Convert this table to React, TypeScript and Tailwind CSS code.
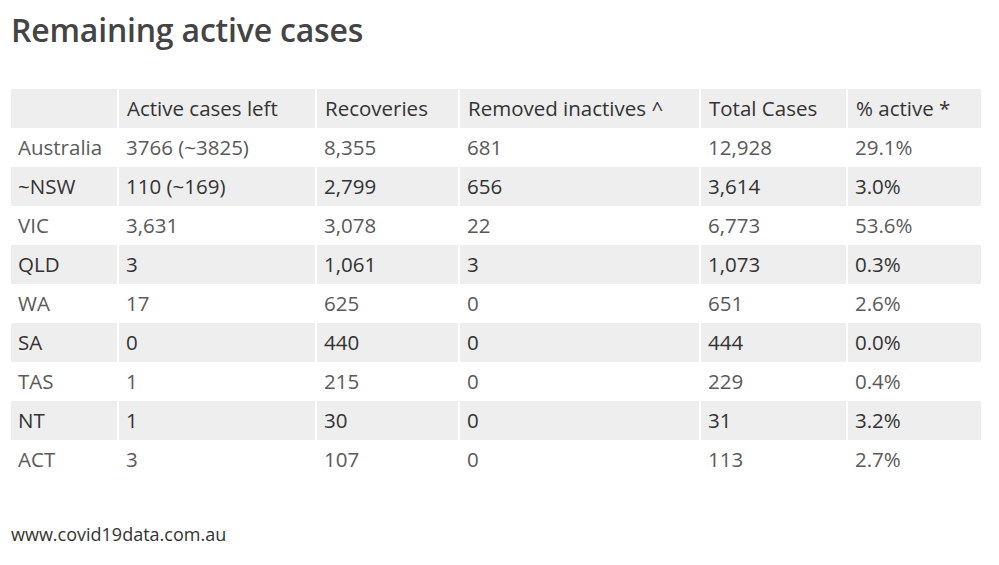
import React from 'react';

const headers = ['', 'Active cases left', 'Recoveries', 'Removed inactives ^', 'Total Cases', '% active *'];

const rows = [
  ['Australia', '3766 (~3825)', '8,355', '681', '12,928', '29.1%'],
  ['~NSW', '110 (~169)', '2,799', '656', '3,614', '3.0%'],
  ['VIC', '3,631', '3,078', '22', '6,773', '53.6%'],
  ['QLD', '3', '1,061', '3', '1,073', '0.3%'],
  ['WA', '17', '625', '0', '651', '2.6%'],
  ['SA', '0', '440', '0', '444', '0.0%'],
  ['TAS', '1', '215', '0', '229', '0.4%'],
  ['NT', '1', '30', '0', '31', '3.2%'],
  ['ACT', '3', '107', '0', '113', '2.7%'],
];

const widths = ['w-[107px]', 'w-[198px]', 'w-[143px]', 'w-[241px]', 'w-[147px]', 'w-[134px]'];

export default function App() {
  return (
    <div className="w-[999px] h-[565px] bg-white font-['Open_Sans',sans-serif] overflow-hidden">
      <h1 className="pl-[11px] pt-[10px] text-[32px] leading-[40px] text-[#444] font-semibold tracking-[-0.2px]">
        Remaining active cases
      </h1>

      <table className="ml-[11px] mt-[39px] table-fixed border-collapse w-[970px] text-[20.5px]">
        <colgroup>
          {widths.map((w, i) => (
            <col key={i} className={w} />
          ))}
        </colgroup>
        <thead>
          <tr className="bg-[#eeeeee] text-[#333]">
            {headers.map((h, i) => (
              <th
                key={i}
                className={`h-[39px] px-[8px] text-left font-normal ${i > 0 ? 'border-l-2 border-white' : ''}`}
              >
                {h}
              </th>
            ))}
          </tr>
        </thead>
        <tbody>
          {rows.map((r, ri) => (
            <tr key={ri} className={ri % 2 === 1 ? 'bg-[#eeeeee] text-[#333]' : 'bg-white text-[#5a5a5a]'}>
              {r.map((c, ci) => (
                <td
                  key={ci}
                  className={`h-[39px] px-[7px] text-left ${ci > 0 ? 'border-l-2 border-white' : ''}`}
                >
                  {c}
                </td>
              ))}
            </tr>
          ))}
        </tbody>
      </table>

      <div className="pl-[11px] mt-[42px] text-[18px] text-[#333]">www.covid19data.com.au</div>
    </div>
  );
}
